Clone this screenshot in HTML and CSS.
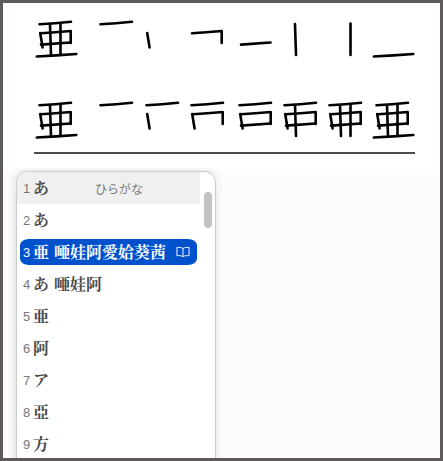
FILE: index.html
```html
<!DOCTYPE html>
<html lang="ja">
<head>
<meta charset="utf-8">
<title>亜</title>
<link rel="stylesheet" href="styles.css">
</head>
<body>
<div class="frame">
  <section class="strokes">
    <svg class="strokes-svg" width="437" height="165" viewBox="3 3 437 165" aria-hidden="true">
      <defs>
        <path id="s1" d="M39.5 24.3 Q55 23.5 71 21.8"/>
        <path id="s2" d="M40.2 33 L42.6 47.5"/>
        <path id="s3" d="M41 33.3 Q55 32.5 70.7 31 L70.7 43"/>
        <path id="s4" d="M41 44.6 L70.5 42.5"/>
        <path id="s5" d="M50 24 L51 55"/>
        <path id="s6" d="M60.5 23.5 L60.5 55"/>
        <path id="s7" d="M36.8 56.5 Q56 55.5 76.3 54"/>
        <g id="c2"><use href="#s1"/><use href="#s2"/></g>
        <g id="c3"><use href="#c2"/><use href="#s3"/></g>
        <g id="c4"><use href="#c3"/><use href="#s4"/></g>
        <g id="c5"><use href="#c4"/><use href="#s5"/></g>
        <g id="c6"><use href="#c5"/><use href="#s6"/></g>
        <g id="c7"><use href="#c6"/><use href="#s7"/></g>
      </defs>
      <g class="ink">
        <use href="#c7"/>
        <use href="#s1" x="61"/>
        <use href="#s2" x="107"/>
        <use href="#s3" x="151"/>
        <use href="#s4" x="200"/>
        <use href="#s5" x="245"/>
        <use href="#s6" x="290"/>
        <use href="#s7" x="337"/>
        <use href="#c7" y="81"/>
        <use href="#s1" x="61" y="81"/>
        <use href="#c2" x="107" y="81"/>
        <use href="#c3" x="152" y="81"/>
        <use href="#c4" x="200" y="81"/>
        <use href="#c5" x="245" y="81"/>
        <use href="#c6" x="290" y="81"/>
        <use href="#c7" x="337" y="81"/>
      </g>
      <line class="rule" x1="34" y1="153" x2="415" y2="153"/>
    </svg>
  </section>
  <section class="lower">
    <div class="panel">
      <ul class="list">
        <li class="row row-hover"><span class="num">1</span><span class="word">あ</span><span class="hint">ひらがな</span></li>
        <li class="row"><span class="num">2</span><span class="word">あ</span></li>
        <li class="row row-selected"><span class="num">3</span><span class="word">亜</span><span class="word extra">唖娃阿愛姶葵茜</span>
          <svg class="book" width="14" height="12" viewBox="0 0 15 12" aria-hidden="true"><path d="M7.5 2.3 C6 1 3.5 .9 1 1.2 V10 C3.5 9.7 6 9.8 7.5 11 C9 9.8 11.5 9.7 14 10 V1.2 C11.5 .9 9 1 7.5 2.3 Z M7.5 2.3 V11"/></svg>
        </li>
        <li class="row"><span class="num">4</span><span class="word">あ</span><span class="word extra">唖娃阿</span></li>
        <li class="row"><span class="num">5</span><span class="word">亜</span></li>
        <li class="row"><span class="num">6</span><span class="word">阿</span></li>
        <li class="row"><span class="num">7</span><span class="word">ア</span></li>
        <li class="row"><span class="num">8</span><span class="word">亞</span></li>
        <li class="row"><span class="num">9</span><span class="word">方</span></li>
      </ul>
      <div class="thumb"></div>
    </div>
  </section>
</div>
</body>
</html>
```
FILE: styles.css
```css
* { box-sizing: border-box; }
html, body { margin: 0; padding: 0; }
body { width: 443px; height: 461px; overflow: hidden; background: #fff; }

.frame {
  width: 443px;
  height: 461px;
  border: 3px solid #5d595d;
  display: flex;
  flex-direction: column;
  overflow: hidden;
  background: #fff;
}

.strokes { height: 165px; flex: none; background: #fff; }
.strokes-svg { display: block; }
.ink { fill: none; stroke: #000; stroke-width: 2.6; stroke-linecap: round; stroke-linejoin: round; }
.rule { stroke: #111; stroke-width: 1.4; }

.lower {
  flex: 1;
  min-height: 0;
  background: linear-gradient(#fff, #fcfcfc 6px);
  padding: 3px 0 0 13px;
  overflow: hidden;
}

.panel {
  position: relative;
  width: 200px;
  height: 320px;
  background: #fff;
  border: 1px solid #cccccc;
  border-radius: 11px 11px 0 0;
  box-shadow: -1px 0 8px rgba(0, 0, 0, .13);
  overflow: hidden;
}

.list { list-style: none; margin: 0; padding: 0; }

.row {
  height: 32px;
  display: flex;
  align-items: center;
  padding: 0 0 0 6px;
  color: #4a4a4a;
  font-family: "Noto Serif CJK JP", "Noto Sans CJK JP", serif;
  font-size: 16px;
  font-weight: 700;
}

.num {
  width: 10px;
  flex: none;
  font-family: "Liberation Sans", sans-serif;
  font-size: 13px;
  font-weight: 400;
  color: #777;
}

.word { line-height: 16px; height: 16px; }
.extra { margin-left: 5px; }

.row-hover { width: 183px; background: #f0f0f0; }

.hint {
  margin-left: 46px;
  font-family: "Noto Sans CJK JP", sans-serif;
  font-size: 12px;
  font-weight: 400;
  color: #777;
}

.row-selected {
  position: relative;
  color: #fff;
  background: #0052cc;
  background-clip: padding-box;
  border-top: 3px solid transparent;
  border-bottom: 3px solid transparent;
  width: 177px;
  margin-left: 3px;
  padding: 0 0 0 3px;
  border-radius: 9px;
}
.row-selected .num { color: #fff; }
.row-selected .book { margin-left: 10px; }

.book { flex: none; fill: none; stroke: #fff; stroke-width: 1; stroke-linejoin: round; }

.thumb {
  position: absolute;
  top: 20px;
  left: 187px;
  width: 8px;
  height: 36px;
  border-radius: 4px;
  background: #c3c3c3;
}
```
